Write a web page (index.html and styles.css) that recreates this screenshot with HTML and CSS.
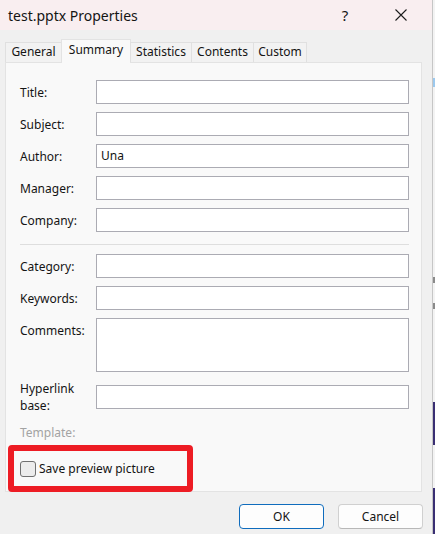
FILE: index.html
```html
<!DOCTYPE html>
<html lang="en">
<head>
    <meta charset="UTF-8">
    <title>test.pptx Properties</title>
    <link rel="stylesheet" href="styles.css">
</head>
<body>
    <div class="dialog">
        <!-- Title Bar -->
        <div class="title-bar">
            <div class="title-text">test.pptx Properties</div>
            <div class="title-button">?</div>
            <div class="title-button close">
                <svg width="12" height="12" viewBox="0 0 12 12">
                    <path d="M0.5 0.5L11.5 11.5M11.5 0.5L0.5 11.5" stroke="#1b1b1b" stroke-width="1.1" fill="none"/>
                </svg>
            </div>
        </div>

        <div class="dialog-body">
            <!-- Tabs -->
            <div class="tabs">
                <div class="tab tab-general">General</div>
                <div class="tab tab-summary active">Summary</div>
                <div class="tab tab-statistics">Statistics</div>
                <div class="tab tab-contents">Contents</div>
                <div class="tab tab-custom">Custom</div>
            </div>

            <!-- Summary Panel -->
            <div class="panel">
                <div class="form-grid">
                    <label class="field-label">Title:</label>
                    <div class="field"></div>

                    <label class="field-label">Subject:</label>
                    <div class="field"></div>

                    <label class="field-label">Author:</label>
                    <div class="field">Una</div>

                    <label class="field-label">Manager:</label>
                    <div class="field"></div>

                    <label class="field-label">Company:</label>
                    <div class="field"></div>

                    <div class="separator"></div>

                    <label class="field-label">Category:</label>
                    <div class="field"></div>

                    <label class="field-label">Keywords:</label>
                    <div class="field"></div>

                    <label class="field-label top">Comments:</label>
                    <div class="field multiline"></div>

                    <label class="field-label wrap">Hyperlink base:</label>
                    <div class="field"></div>

                    <label class="field-label disabled">Template:</label>
                    <div></div>
                </div>

                <div class="option-row">
                    <span class="checkbox"></span>
                    <span>Save preview picture</span>
                </div>

                <div class="highlight"></div>
            </div>

            <!-- Buttons -->
            <div class="button-row">
                <div class="btn primary">OK</div>
                <div class="btn">Cancel</div>
            </div>
        </div>
    </div>

    <!-- desktop behind the dialog -->
    <div class="backdrop">
        <div class="bd-gap" style="height: 78px"></div>
        <div class="bd-mark blue" style="height: 9px"></div>
        <div class="bd-gap" style="height: 190px"></div>
        <div class="bd-mark" style="height: 6px"></div>
        <div class="bd-gap" style="height: 20px"></div>
        <div class="bd-mark" style="height: 6px"></div>
        <div class="bd-gap" style="height: 93px"></div>
        <div class="bd-mark purple" style="height: 43px"></div>
        <div class="bd-gap" style="height: 43px"></div>
        <div class="bd-mark purple" style="height: 46px"></div>
    </div>
</body>
</html>
```

FILE: styles.css
```css
* {
    margin: 0;
    padding: 0;
    box-sizing: border-box;
}

body {
    font-family: "Noto Sans", "Open Sans", sans-serif;
    font-size: 12px;
    color: #141414;
    background: #f3f3f3;
    width: 435px;
    height: 534px;
    overflow: hidden;
    display: flex;
}

.dialog {
    width: 433px;
    height: 534px;
    background: #f0f0f0;
    border-right: 1px solid #c6c6c6;
    display: flex;
    flex-direction: column;
}

/* Title Bar */
.title-bar {
    height: 30px;
    background: #f9eef0;
    display: flex;
    align-items: center;
    padding: 0 8px 0 8px;
    font-size: 14px;
}

.title-text {
    flex: 1;
}

.title-button {
    width: 46px;
    height: 30px;
    display: flex;
    align-items: center;
    justify-content: center;
    font-size: 15px;
}

.title-button.close {
    margin-left: 10px;
}

/* Body */
.dialog-body {
    flex: 1;
    padding: 9px 10px 0 5px;
    display: flex;
    flex-direction: column;
}

/* Tabs */
.tabs {
    display: flex;
    align-items: flex-end;
    height: 24px;
    margin-bottom: -1px;
    position: relative;
    z-index: 1;
}

.tab {
    height: 20px;
    line-height: 18px;
    text-align: center;
    margin-bottom: 1px;
    margin-left: -1px;
    border: 1px solid #e0e0e0;
    border-bottom: none;
    background: #f2f2f2;
}

.tab:first-child {
    margin-left: 0;
}

.tab-general { width: 57px; }
.tab-summary { width: 70px; }
.tab-statistics { width: 62px; }
.tab-contents { width: 63px; }
.tab-custom { width: 54px; }

.tab.active {
    height: 24px;
    line-height: 20px;
    margin-bottom: 0;
    background: #f9f9f9;
    border-color: #e3e3e3;
}

/* Panel */
.panel {
    height: 430px;
    background: #f9f9f9;
    border: 1px solid #e3e3e3;
    padding: 17px 12px 0 14px;
    position: relative;
}

.form-grid {
    display: grid;
    grid-template-columns: 76px 1fr;
    row-gap: 8px;
}

.field-label {
    align-self: center;
    line-height: 17px;
}

.field-label.top {
    align-self: start;
    padding-top: 4px;
}

.field-label.wrap {
    width: 60px;
}

.field-label.disabled {
    color: #a3a3a3;
    margin-top: 2px;
}

.field {
    height: 24px;
    background: #fff;
    border: 1px solid #ababb3;
    padding: 0 4px;
    line-height: 22px;
    align-self: center;
}

.field.multiline {
    height: 54px;
}

.separator {
    grid-column: 1 / 3;
    height: 1px;
    background: #dedede;
    margin: 4px 0 1px 0;
}

/* Checkbox option */
.option-row {
    display: flex;
    align-items: center;
    gap: 3px;
    margin-top: 19px;
}

.checkbox {
    width: 16px;
    height: 16px;
    border: 1px solid #707070;
    border-radius: 3px;
    background: #ececec;
}

.highlight {
    position: absolute;
    left: 2px;
    top: 382px;
    width: 185px;
    height: 47px;
    border: 6px solid #ed1c24;
    border-radius: 4px;
}

/* Buttons */
.button-row {
    display: flex;
    justify-content: flex-end;
    gap: 14px;
    margin-top: 12px;
    margin-right: -1px;
}

.btn {
    width: 85px;
    height: 25px;
    line-height: 23px;
    text-align: center;
    background: #fdfdfd;
    border: 1px solid #d0d0d0;
    border-bottom-color: #b8b8b8;
    border-radius: 4px;
}

.btn.primary {
    border: 1px solid #0f6cbd;
}

/* Desktop strip */
.backdrop {
    width: 2px;
    display: flex;
    flex-direction: column;
}

.bd-mark {
    background: #8a8a8a;
}

.bd-mark.blue {
    background: #9cc9ee;
}

.bd-mark.purple {
    background: #3a2f73;
}
```
